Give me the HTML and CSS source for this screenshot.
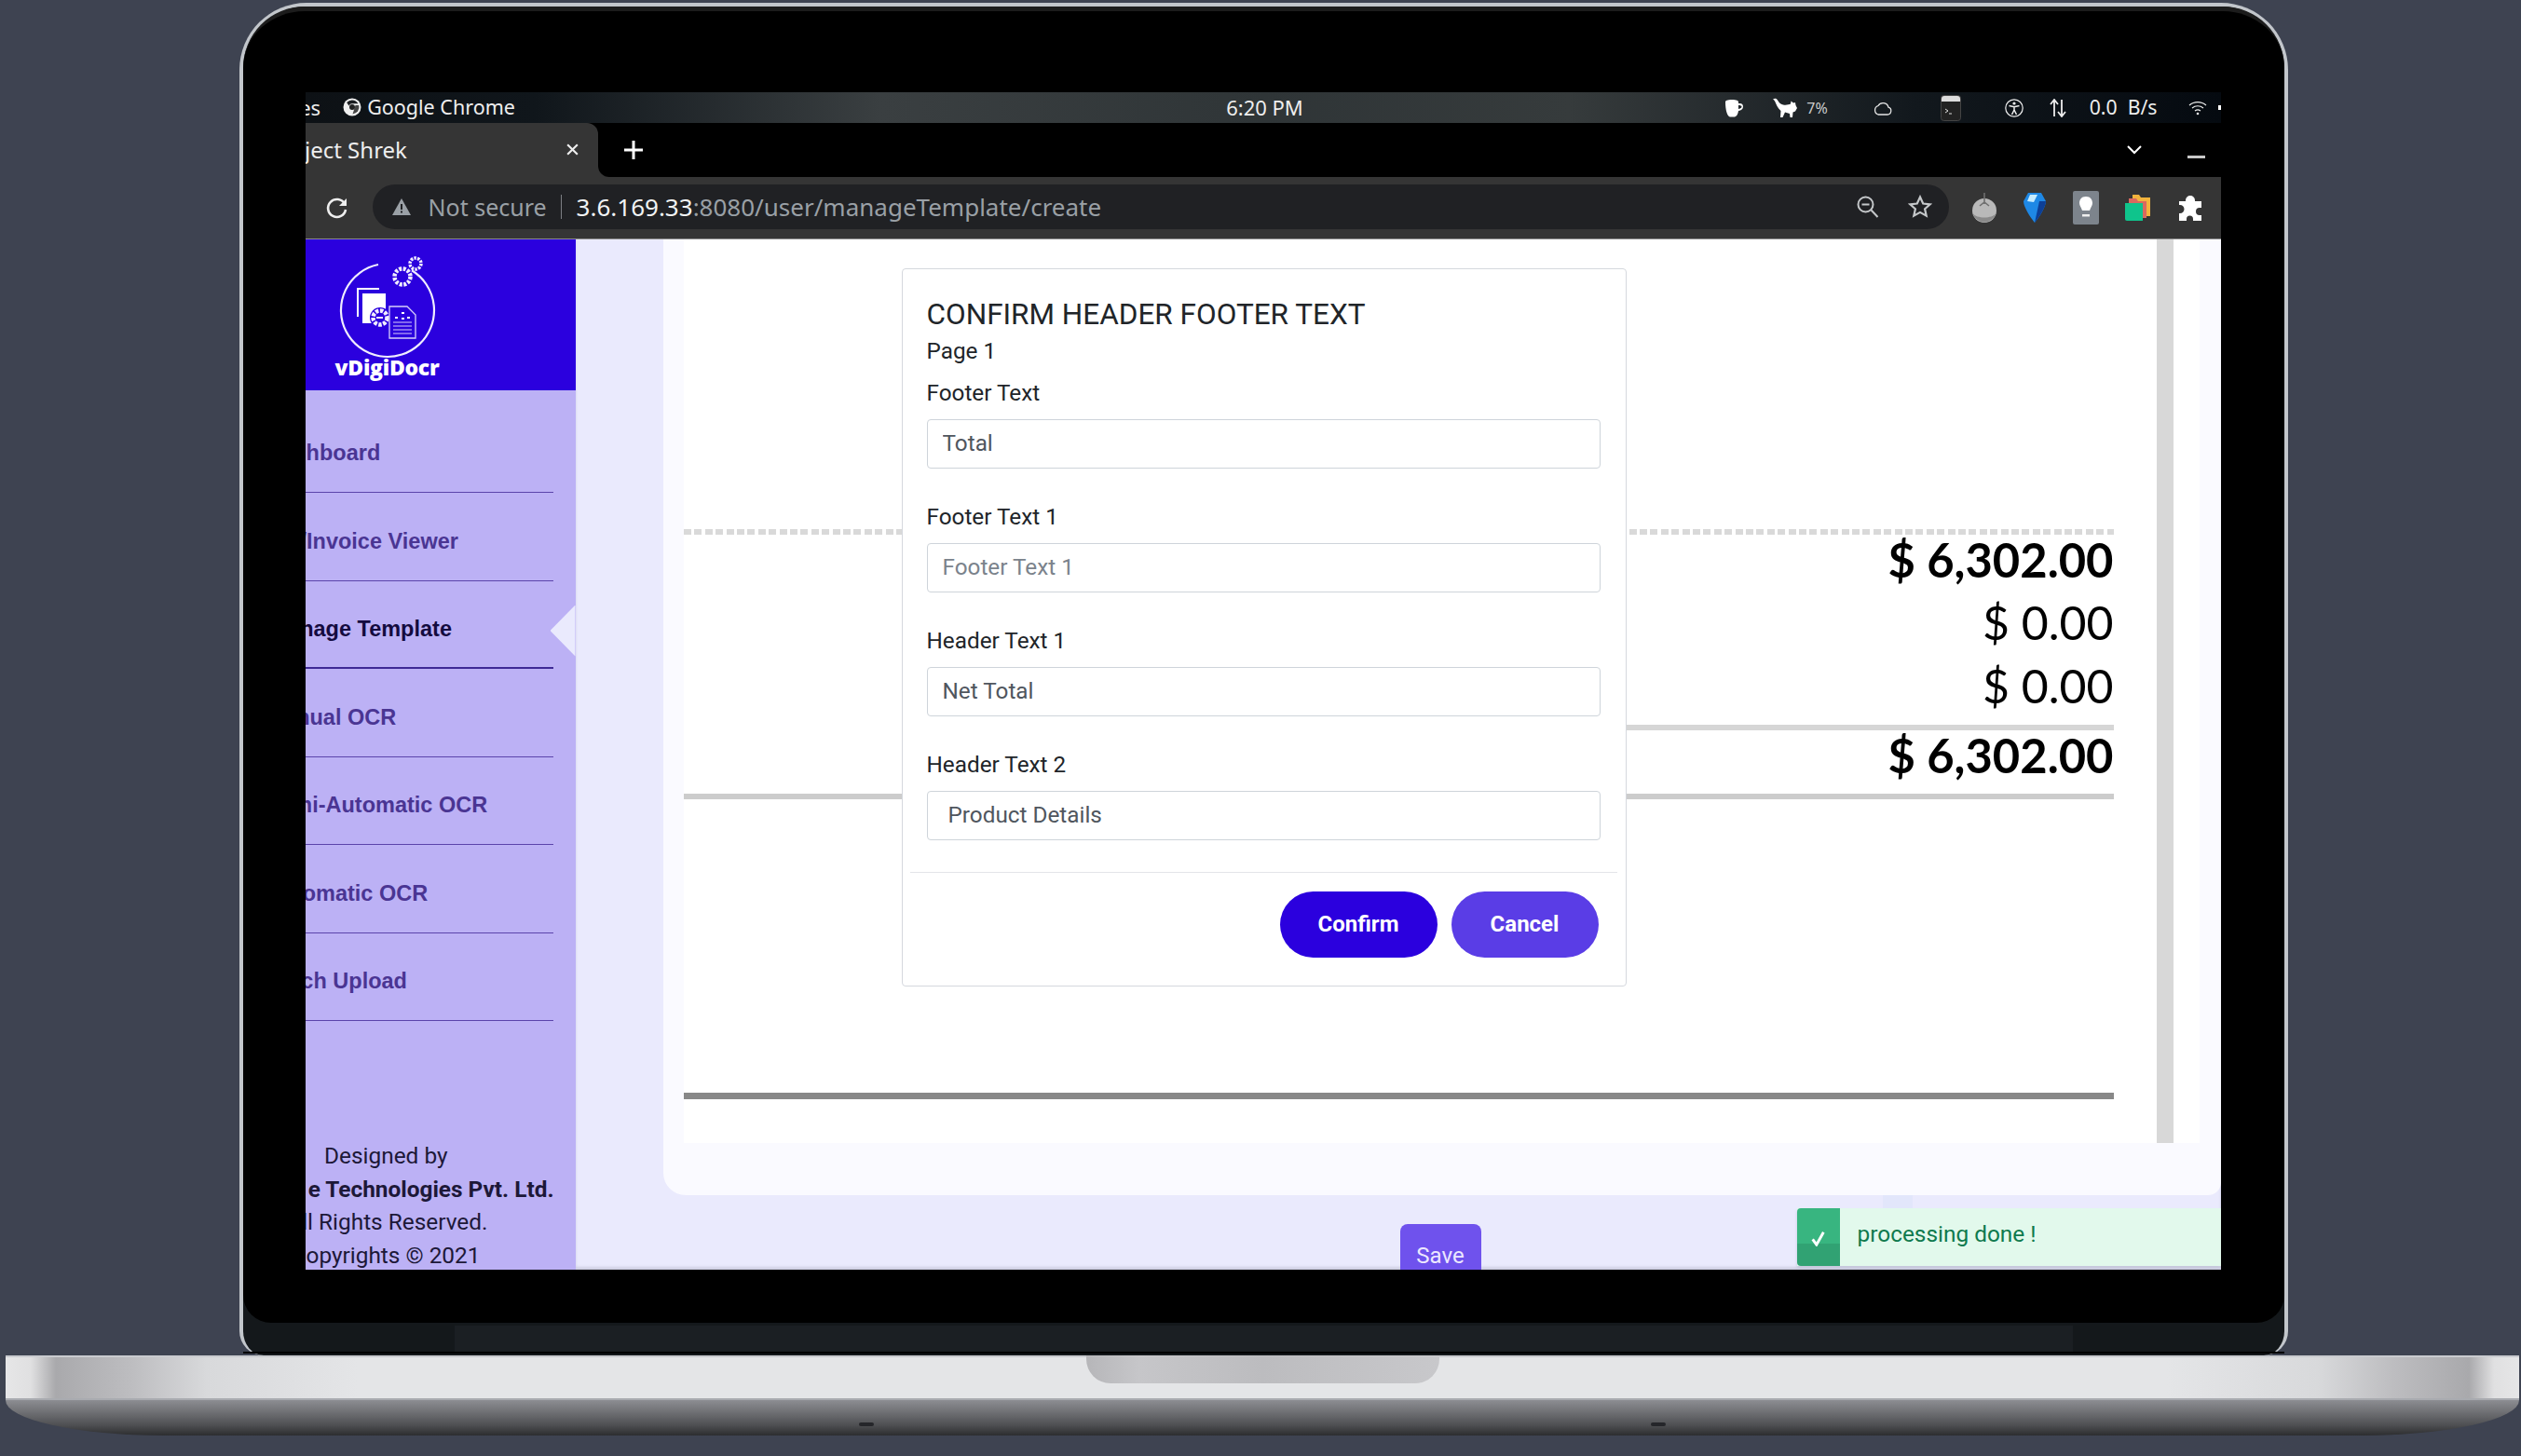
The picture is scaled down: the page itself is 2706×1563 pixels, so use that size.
FILE: index.html
```html
<!DOCTYPE html>
<html lang="en">
<head>
<meta charset="UTF-8" />
<title>vDigiDocr - Manage Template</title>
<link rel="stylesheet" href="styles.css">
</head>
<body>
<div class="device">
  <div class="lid">
    <div class="glass">
      <div class="screen">

        <!-- desktop top bar -->
        <div class="statusbar">
          <div class="st-left">
            <span class="st-activities">Activities</span>
            <svg class="st-chrome" width="20" height="20" viewBox="0 0 20 20"><circle cx="10" cy="10" r="9.5" fill="#efefef"/><path d="M10 2.500a7.500 7.500 0 0 1 6.500 3.800H10A3.800 3.800 0 0 0 6.500 8.500L4.200 5A7.500 7.500 0 0 1 10 2.500z" fill="#1a1d20"/><path d="M13.500 8l-3 9.400A7.500 7.500 0 0 0 17.200 8z" fill="#444"/><circle cx="10" cy="10" r="3" fill="#222"/></svg>
            <span class="st-app">Google Chrome</span>
          </div>
          <div class="st-time">6:20 PM</div>
          <div class="st-right">
            <svg width="20" height="20" viewBox="0 0 20 20"><path d="M1 3.500C1 2 3 1 8 1s7 1 7 2.500V5h1.500C19 5 20 6.500 20 8.500c0 2.500-2 4-5 4.500-.5 3.500-2 6-4 6.500H6C3 19 1 12 1 3.500z" fill="#fff"/><path d="M15 7v4c2.500-.5 3.500-1.500 3.500-2.500S17 7 15 7z" fill="#20262a"/></svg>
            <svg class="st-cat" width="26" height="22" viewBox="0 0 26 22"><path d="M0 1.500C2 0 4 .5 5 2.500 6.500 5 8 7 11 7.500c3 .5 6 0 8-1l.5-3 2.500 2 2-.5.500 3 1.500 3-2 3.500-2.500 1-.5 5.500h-2.500l-.5-4-5-1.500-2.500 5.500H8l.5-7C5 11 3.500 7 2.500 4.500 2 3 1 2 0 1.500z" fill="#fff"/></svg>
            <span class="st-pct">7%</span>
            <svg class="st-cloud" width="20" height="16" viewBox="0 0 20 16"><path d="M5 15h10a4 4 0 0 0 1-7.800A6 6 0 0 0 5 5.500 5 5 0 0 0 5 15z" fill="none" stroke="#e6e6e6" stroke-width="1.300"/></svg>
            <svg class="st-term" width="22" height="28" viewBox="0 0 22 28"><rect x=".5" y=".5" width="21" height="27" rx="3" fill="#222" stroke="#444"/><path d="M1 7V4a3 3 0 0 1 3-3h14a3 3 0 0 1 3 3v3z" fill="#ddd"/><path d="M5 15l3 2-3 2M9 20h3" fill="none" stroke="#ddd" stroke-width="1"/></svg>
            <svg class="st-access" width="20" height="20" viewBox="0 0 20 20"><circle cx="10" cy="10" r="9.200" fill="none" stroke="#eee" stroke-width="1.200"/><circle cx="10" cy="5" r="1.600" fill="#eee"/><path d="M4.500 7.500L10 8.800l5.500-1.300M10 8.800v3.200M10 12l-2.500 5M10 12l2.500 5" fill="none" stroke="#eee" stroke-width="1.500"/></svg>
            <svg class="st-arrows" width="18" height="20" viewBox="0 0 18 20"><path d="M5 19V2M1 6l4-5 4 5M13 1v17M9 14l4 5 4-5" fill="none" stroke="#eee" stroke-width="1.800"/></svg>
            <span class="st-speed">0.0&nbsp; B/s</span>
            <svg class="st-wifi" width="20" height="16" viewBox="0 0 20 16"><path d="M1 5c5-4.500 13-4.500 18 0M4 8c3.500-3 8.500-3 12 0M7 11c2-1.500 4-1.500 6 0" fill="none" stroke="#eee" stroke-width="1.200"/><circle cx="10" cy="14" r="1.300" fill="#eee"/></svg>
            <span class="st-dot"></span>
          </div>
        </div>

        <!-- chrome tabs -->
        <div class="tabbar">
          <div class="tab">
            <span class="tab-title">Project Shrek</span>
            <svg class="tab-close" width="15" height="15" viewBox="0 0 14 14"><path d="M2 2l10 10M12 2L2 12" stroke="#eee" stroke-width="2"/></svg>
          </div>
          <div class="tab-rest">
            <svg class="tab-new" width="22" height="22" viewBox="0 0 22 22"><path d="M11 1v20M1 11h20" stroke="#fff" stroke-width="3"/></svg>
            <svg class="tab-list" width="16" height="10" viewBox="0 0 16 10"><path d="M1 1l7 7 7-7" fill="none" stroke="#fff" stroke-width="2"/></svg>
            <span class="win-min"></span>
          </div>
        </div>

        <!-- chrome toolbar -->
        <div class="toolbar">
          <svg class="tb-reload" width="26" height="26" viewBox="0 0 26 26"><path d="M21 9a9.500 9.500 0 1 0 1 6" fill="none" stroke="#eee" stroke-width="2.600"/><path d="M23 3v8h-8z" fill="#eee"/></svg>
          <div class="omnibox">
            <svg class="tb-warn" width="22" height="20" viewBox="0 0 22 20"><path d="M11 1l10 18H1z" fill="#9aa0a6"/><path d="M10 7h2v6h-2zM10 14.500h2v2h-2z" fill="#202124"/></svg>
            <span class="tb-notsecure">Not secure</span>
            <span class="tb-divider"></span>
            <span class="tb-url"><b>3.6.169.33</b>:8080/user/manageTemplate/create</span>
            <svg class="tb-zoom" width="26" height="26" viewBox="0 0 26 26"><circle cx="10.500" cy="10.500" r="8" fill="none" stroke="#c4c7c9" stroke-width="2"/><path d="M6.500 10.500h8M16.500 16.500l7 7.500" stroke="#c4c7c9" stroke-width="2"/></svg>
            <svg class="tb-star" width="26" height="26" viewBox="0 0 26 26"><path d="M13 2.500l3.200 7 7.500.8-5.600 5 1.600 7.400L13 18.900l-6.700 3.800 1.600-7.400-5.600-5 7.500-.8z" fill="none" stroke="#c4c7c9" stroke-width="2.200"/></svg>
          </div>
          <div class="extensions">
            <svg width="28" height="34" viewBox="0 0 28 34"><circle cx="14" cy="20" r="13" fill="#b9b9b9"/><path d="M1.500 23a13 13 0 0 0 25 0c-4 6-21 6-25 0z" fill="#8a8a8a"/><path d="M14 1v12M9 15l5-4 5 4" fill="none" stroke="#6f6f6f" stroke-width="1.600"/></svg>
            <svg width="26" height="34" viewBox="0 0 26 34"><path d="M6 1h14l5 9c0 6-7 17-12 23C8 27 1 16 1 10z" fill="#1e88e5"/><path d="M8 3h8l-4 8-7-1z" fill="#c6ecff"/><path d="M13 33c5-6 12-17 12-23h-7z" fill="#0d3f96"/></svg>
            <svg width="28" height="36" viewBox="0 0 28 36"><rect width="28" height="36" rx="2" fill="#7d848c"/><path d="M14 6c-5 0-7 3.500-7 7 0 3 2 4.500 3 8h8c1-3.500 3-5 3-8 0-3.500-2-7-7-7z" fill="#fff"/><rect x="10" y="25" width="8" height="2.500" fill="#eee"/></svg>
            <svg width="28" height="30" viewBox="0 0 28 30"><path d="M8 1h7l2 3h10v20H8z" fill="#f2b33d"/><path d="M4 5h8l2 3h9v18H4z" fill="#d9695f"/><path d="M0 10h19v19H2a2 2 0 0 1-2-2z" fill="#0fc48c"/></svg>
            <svg width="28" height="30" viewBox="0 0 28 30"><path d="M9 7a5 5 0 1 1 10 0v1h7v7h-2a4 4 0 1 0 0 8h2v6H17v-2a3.500 3.500 0 1 0-7 0v2H2v-8h1a4.500 4.500 0 1 0 0-9H2V8h7z" fill="#fff"/></svg>
          </div>
        </div>

        <!-- the page itself -->
        <div class="page">
          <aside class="sidebar">
            <div class="brand">
              <svg class="brand-mark" width="124" height="114" viewBox="0 0 124 114">
                <path d="M52 13A50 50 0 1 0 88 19.300" fill="none" stroke="#f1edff" stroke-width="2.200"/>
                <circle cx="78" cy="26" r="8.500" fill="none" stroke="#f1edff" stroke-width="4.500" stroke-dasharray="3 1.500"/>
                <circle cx="92" cy="12" r="6" fill="none" stroke="#f1edff" stroke-width="3.500" stroke-dasharray="2.500 1.200"/>
                <path d="M29 69V38h24v2H31v29z" fill="#fff"/>
                <rect x="35" y="44" width="25" height="32" fill="#fff"/>
                <circle cx="54" cy="70" r="11" fill="#2b00de"/>
                <circle cx="54" cy="70" r="7.500" fill="none" stroke="#f1edff" stroke-width="4.500" stroke-dasharray="3.500 1.500"/>
                <path d="M50 70h7" stroke="#f1edff" stroke-width="2"/>
                <path d="M64 58h19l9 9v25H64z" fill="#2b00de" stroke="#d8d0fa" stroke-width="1.300"/>
                <path d="M68 75h20M68 79h20M68 83h20M68 87h20" stroke="#d8d0fa" stroke-width="1.200"/>
                <path d="M70 70h3M77 65h3M77 71h3M83 70h3" stroke="#fff" stroke-width="2"/>
              </svg>
              <div class="brand-name">vDigiDocr</div>
            </div>
            <nav class="nav">
              <a class="nav-item nav-first"><span>Dashboard</span></a>
              <a class="nav-item"><span class="nav-slash">/Invoice Viewer</span></a>
              <a class="nav-item nav-active"><span>Manage Template</span></a>
              <a class="nav-item"><span>Manual OCR</span></a>
              <a class="nav-item"><span>Semi-Automatic OCR</span></a>
              <a class="nav-item"><span>Automatic OCR</span></a>
              <a class="nav-item"><span>Batch Upload</span></a>
            </nav>
            <div class="credits">
              <p class="cr-design">Designed by</p>
              <p class="cr-company"><b>e Technologies Pvt. Ltd.</b></p>
              <p class="cr-rights">All Rights Reserved.</p>
              <p class="cr-copy">Copyrights © 2021</p>
            </div>
          </aside>

          <main class="main">
            <section class="panel">
              <div class="sheet">
                <div class="invoice">
                  <div class="rule-dotted"></div>
                  <div class="amount amount-bold">$ 6,302.00</div>
                  <div class="amount">$ 0.00</div>
                  <div class="amount">$ 0.00</div>
                  <div class="rule-total"></div>
                  <div class="amount-grand amount-bold">$ 6,302.00</div>
                  <div class="rule-bottom"></div>
                  <div class="rule-end"></div>
                </div>
                <div class="sheet-scroll"></div>
              </div>
            </section>
            <button class="btn-save">Save</button>
          </main>

          <div class="modal">
            <h2 class="modal-title">CONFIRM HEADER FOOTER TEXT</h2>
            <div class="modal-page">Page 1</div>
            <div class="field">
              <label for="f1">Footer Text</label>
              <input type="text" id="f1" value="Total"/>
            </div>
            <div class="field">
              <label for="f2">Footer Text 1</label>
              <input type="text" id="f2" placeholder="Footer Text 1"/>
            </div>
            <div class="field">
              <label for="f3">Header Text 1</label>
              <input type="text" id="f3" value="Net Total"/>
            </div>
            <div class="field">
              <label for="f4">Header Text 2</label>
              <input type="text" id="f4" value=" Product Details"/>
            </div>
            <div class="modal-footer">
              <button class="btn btn-confirm">Confirm</button>
              <button class="btn btn-cancel">Cancel</button>
            </div>
          </div>

          <div class="toast">
            <div class="toast-icon">
              <svg width="15" height="17" viewBox="0 0 18 20"><path d="M2 11l5 7L16 2" fill="none" stroke="#fff" stroke-width="3.500"/></svg>
            </div>
            <div class="toast-text">processing done !</div>
          </div>
        </div>

      </div>
    </div>
    <div class="hinge"><div class="hinge-inner"></div></div>
  </div>
  <div class="base">
    <div class="base-notch"></div>
  </div>
  <div class="base-under">
    <span class="foot"></span>
    <span class="foot"></span>
  </div>
</div>
</body>
</html>
```
FILE: styles.css
```css
* {
	margin: 0;
	padding: 0;
	box-sizing: border-box;
}

html, body {
	width: 2706px;
	height: 1563px;
	overflow: hidden;
	background: #3e4351;
}

body {
	font-family: Roboto, "Liberation Sans", sans-serif;
}

.device {
	display: flex;
	flex-direction: column;
	align-items: center;
	padding-top: 3px;
}

/* lid */
.lid {
	width: 2199px;
	height: 1452px;
	margin-left: 6px;
	background: #14181b;
	border: 4px solid #c2c6cb;
	border-bottom: 0;
	border-radius: 72px 72px 26px 26px;
}

.glass {
	height: 1413px;
	padding: 92px 0 0 67px;
	background: #000;
	border-radius: 66px 66px 30px 30px;
	border-top: 5px solid #1c1c1c;
}

.hinge {
	height: 33px;
	padding: 3px 227px 0;
	border-bottom: 2px solid #000;
}

.hinge-inner {
	height: 100%;
	background: #1b1f23;
}

.screen {
	width: 2056px;
	height: 1264px;
	margin-top: -5px;
	display: flex;
	flex-direction: column;
	overflow: hidden;
}

/* desktop top bar */
.statusbar {
	height: 33px;
	flex: none;
	display: grid;
	grid-template-columns: 1fr auto 1fr;
	align-items: center;
	color: #eee;
	font: 22px "Noto Sans", sans-serif;
	background: linear-gradient(90deg, #0d1115 0, #10161b 12%, #3a3f41 30%, #2f3537 50%, #363b3c 66%, #12181d 84%, #050a10 100%);
}

.st-left, .st-right {
	display: flex;
	align-items: center;
	white-space: nowrap;
}

.st-left {
	overflow: hidden;
	padding-bottom: 2px;
}

.st-activities {
	margin-left: -75px;
}

.st-chrome {
	margin-left: 24px;
	flex: none;
}

.st-app {
	margin-left: 6px;
	font-size: 21.5px;
}

.st-time {
	margin-left: 4px;
	padding-bottom: 2px;
}

.st-right {
	justify-content: flex-end;
}

.st-cat { margin-left: 32px; }
.st-pct { margin-left: 10px; font-size: 16px; color: #ccc; }
.st-cloud { margin-left: 49px; }
.st-term { margin-left: 52px; }
.st-access { margin-left: 47px; }
.st-arrows { margin-left: 28px; }
.st-speed { margin-left: 25px; font-size: 21.2px; padding-bottom: 2px; }
.st-wifi { margin-left: 33px; }

.st-dot {
	width: 3px;
	height: 5px;
	margin-left: 12px;
	background: #fff;
}

/* tabs */
.tabbar {
	height: 58px;
	flex: none;
	display: flex;
	background: linear-gradient(#000 50%, #353535 50%);
}

.tab {
	width: 314px;
	display: flex;
	align-items: center;
	justify-content: space-between;
	padding: 0 20px 2px 0;
	background: #353535;
	border-radius: 0 12px 0 0;
	overflow: hidden;
}

.tab-title {
	margin-left: -39px;
	color: #eee;
	font: 24px "Noto Sans", sans-serif;
	white-space: nowrap;
}

.tab-rest {
	flex: 1;
	display: flex;
	align-items: center;
	padding-left: 27px;
	background: #000;
	border-radius: 0 0 0 12px;
}

.tab-list {
	margin-left: auto;
}

.win-min {
	width: 19px;
	height: 3px;
	margin: 14px 17px 0 49px;
	background: #c8c8c8;
}

/* toolbar */
.toolbar {
	height: 67px;
	flex: none;
	display: flex;
	align-items: center;
	padding: 0 19px 0 21px;
	background: #353535;
	border-bottom: 1px solid #8a8a8a;
}

.omnibox {
	width: 1692px;
	height: 48px;
	margin-left: 25px;
	margin-bottom: 2px;
	display: flex;
	align-items: center;
	padding: 0 18px 0 20px;
	background: #202124;
	border-radius: 24px;
	font: 25px "Noto Sans", sans-serif;
	color: #9aa0a6;
	white-space: nowrap;
}

.tb-notsecure { margin-left: 18px; }

.tb-divider {
	width: 1px;
	height: 26px;
	margin: 0 16px 0 15px;
	background: #7c7f84;
}

.tb-url {
	font-size: 26px;
}

.tb-url b {
	font-weight: 400;
	color: #f1f3f4;
}

.tb-zoom { margin-left: auto; }
.tb-star { margin-left: 30px; }

.extensions {
	flex: 1;
	display: flex;
	align-items: center;
	justify-content: space-between;
	margin-left: 24px;
}

/* page */
.page {
	position: relative;
	flex: 1;
	display: flex;
	min-height: 0;
	overflow: hidden;
}

.sidebar {
	width: 290px;
	flex: none;
	display: flex;
	flex-direction: column;
	background: #bcb1f5;
	overflow: hidden;
}

.brand {
	height: 162px;
	flex: none;
	display: flex;
	flex-direction: column;
	align-items: center;
	padding: 14px 114px 0 0;
	background: #2b00de;
	color: #fff;
}

.brand-name {
	margin-top: -4px;
	font: 800 23px "Open Sans", sans-serif;
	line-height: 26px;
	letter-spacing: -.3px;
}

.nav {
	margin-right: 24px;
	padding-top: 15.5px;
}

.nav-item {
	position: relative;
	height: 94.5px;
	display: flex;
	align-items: center;
	padding-top: 11px;
	color: #4a3593;
	font: 700 23.5px "Liberation Sans", sans-serif;
	white-space: nowrap;
	border-bottom: 1px solid #5b44ab;
}

.nav-item span {
	margin-left: -42px;
}

.nav-item .nav-slash {
	margin-left: -5px;
}

.nav-active span {
	margin-left: -38px;
}

.nav-active {
	color: #140b3f;
	border-bottom: 2px solid #3f2a96;
}

.nav-active::after {
	content: "";
	position: absolute;
	right: -24px;
	top: 26px;
	width: 27px;
	height: 55px;
	background: #eaeafd;
	clip-path: polygon(0 50%, 100% 0, 100% 100%);
}

.credits {
	margin-top: auto;
	margin-bottom: -2px;
	font-size: 24.4px;
	line-height: 35.5px;
	color: #1d1838;
}

.credits p {
	display: flex;
	justify-content: flex-end;
	white-space: nowrap;
}

.cr-design { padding-right: 137px; }
.cr-company { padding-right: 23px; }
.cr-rights { padding-right: 94px; }
.cr-copy { padding-right: 102px; }

.main {
	flex: 1;
	min-width: 0;
	display: flex;
	flex-direction: column;
	align-items: flex-start;
	background: #eaeafd;
	box-shadow: inset 0 -3px 3px #cfcfe4;
}

.panel {
	width: 1672px;
	height: 1026px;
	flex: none;
	margin-left: 94px;
	padding: 0 23px 56px 22px;
	background: #fafaff;
	border-radius: 0 0 14px 24px;
}

.sheet {
	height: 100%;
	display: flex;
	background: #fff;
}

.invoice {
	width: 1535px;
	flex: none;
	padding-top: 311px;
}

.sheet-scroll {
	width: 18px;
	margin-left: 46px;
	background: #d8d8d8;
}

.rule-dotted {
	height: 6px;
	background: repeating-linear-gradient(90deg, #d9d9d9 0, #d9d9d9 8px, transparent 8px, transparent 11.4px);
}

.amount, .amount-grand {
	height: 56px;
	margin-top: 12px;
	text-align: right;
	color: #000;
	font: 400 50px/53px Lato, "Liberation Sans", sans-serif;
}

.amount:nth-child(2) {
	margin-top: 0;
}

.amount-grand {
	margin-top: 0;
}

.amount-bold {
	font-size: 50.7px;
	font-weight: 700;
}

.rule-total {
	height: 6px;
	margin: 12px 0 0 300px;
	background: #d6d6d6;
}

.rule-bottom {
	height: 6px;
	margin-top: 12px;
	background: #cccccc;
}

.rule-end {
	height: 7px;
	margin-top: 315px;
	background: #888888;
}

.btn-save {
	width: 87px;
	height: 60px;
	flex: none;
	margin: 31px 0 0 885px;
	padding-top: 8px;
	border: none;
	border-radius: 8px 8px 0 0;
	background: #6f52ed;
	color: #ece8ff;
	font: 24px Roboto, sans-serif;
}

/* modal sits over the sheet */
.modal {
	position: absolute;
	left: 640px;
	top: 31px;
	width: 778px;
	height: 771px;
	padding: 30px 27px 0 26px;
	background: #fff;
	border: 1px solid #d5d8de;
	border-radius: 4px;
}

.modal-title {
	height: 38px;
	font-size: 31.5px;
	font-weight: 400;
	line-height: 38px;
	color: #212529;
	white-space: nowrap;
}

.modal-page {
	height: 28px;
	margin-top: 6px;
	margin-bottom: 17px;
	font-size: 24.3px;
	line-height: 28px;
	color: #212529;
}

.field {
	margin-bottom: 38px;
}

.field:nth-last-of-type(2) {
	margin-bottom: 0;
}

.field label {
	display: block;
	height: 28px;
	margin-bottom: 14px;
	font-size: 24.3px;
	line-height: 28px;
	color: #212529;
}

.field input {
	display: block;
	width: 100%;
	height: 53px;
	padding: 0 16px 3px;
	background: #fff;
	border: 1px solid #ced4da;
	border-radius: 4px;
	color: #50565e;
	font: 24.3px Roboto, sans-serif;
	outline: none;
}

.field input::placeholder {
	color: #7b838c;
	opacity: 1;
}

.modal-footer {
	height: 92px;
	margin: 34px -18px 0 -18px;
	display: flex;
	justify-content: flex-end;
	align-items: flex-start;
	gap: 15px;
	padding: 20px 20px 0 0;
	border-top: 1px solid #e3e5e9;
}

.btn {
	height: 71px;
	padding-bottom: 2px;
	border: none;
	border-radius: 36px;
	color: #fff;
	font: 700 24px Roboto, sans-serif;
}

.btn-confirm {
	width: 169px;
	background: #2b00de;
}

.btn-cancel {
	width: 158px;
	background: #5a3de6;
}

/* toast */
.toast {
	position: absolute;
	left: 1601px;
	right: 0;
	top: 1040px;
	height: 62px;
	display: flex;
	align-items: stretch;
	background: #e2f9ec;
	box-shadow: 0 3px 3px #c6c8dc;
}

.toast::before {
	content: "";
	position: absolute;
	left: 92px;
	top: -14px;
	width: 32px;
	height: 14px;
	background: #e2e6fb;
}

.toast-icon {
	width: 46px;
	display: flex;
	align-items: center;
	justify-content: center;
	padding-top: 2px;
	background: linear-gradient(#38b580 62%, #31a273 62%);
	border-radius: 4px 0 0 4px;
}

.toast-text {
	margin-left: 19px;
	color: #0f7a4e;
	font-size: 24.4px;
	line-height: 56px;
}

/* base */
.base {
	width: 2698px;
	height: 48px;
	flex: none;
	margin-left: 4px;
	display: flex;
	justify-content: center;
	background: linear-gradient(90deg, #e6e6e7 0, #e0e0e1 1%, #a9a9ac 2%, #bdbdc0 5%, #d8d9db 8%, #e4e5e7 14%, #e4e5e7 86%, #d8d9db 92%, #bdbdc0 95%, #a9a9ac 98%, #e0e0e1 99%, #e6e6e7 100%);
	border-top: 2px solid #c9cbcf;
	border-bottom: 2px solid #a9abb0;
}

.base-notch {
	width: 379px;
	height: 30px;
	margin-top: -2px;
	background: linear-gradient(90deg, #b6b6b9 0, #c6c6c9 15%, #bcbcbf 50%, #c8c8cb 100%);
	border-radius: 0 0 26px 26px / 0 0 26px 26px;
}

.base-under {
	width: 2698px;
	height: 38px;
	flex: none;
	margin-left: 4px;
	display: flex;
	justify-content: center;
	gap: 834px;
	padding-top: 24px;
	background: linear-gradient(#8c8d92 0, #77787c 25%, #4f5053 70%, #2c2d2f 100%);
	border-radius: 0 0 170px 170px / 0 0 38px 38px;
}

.foot {
	width: 16px;
	height: 4px;
	background: #25262a;
	border-radius: 2px;
}
```
